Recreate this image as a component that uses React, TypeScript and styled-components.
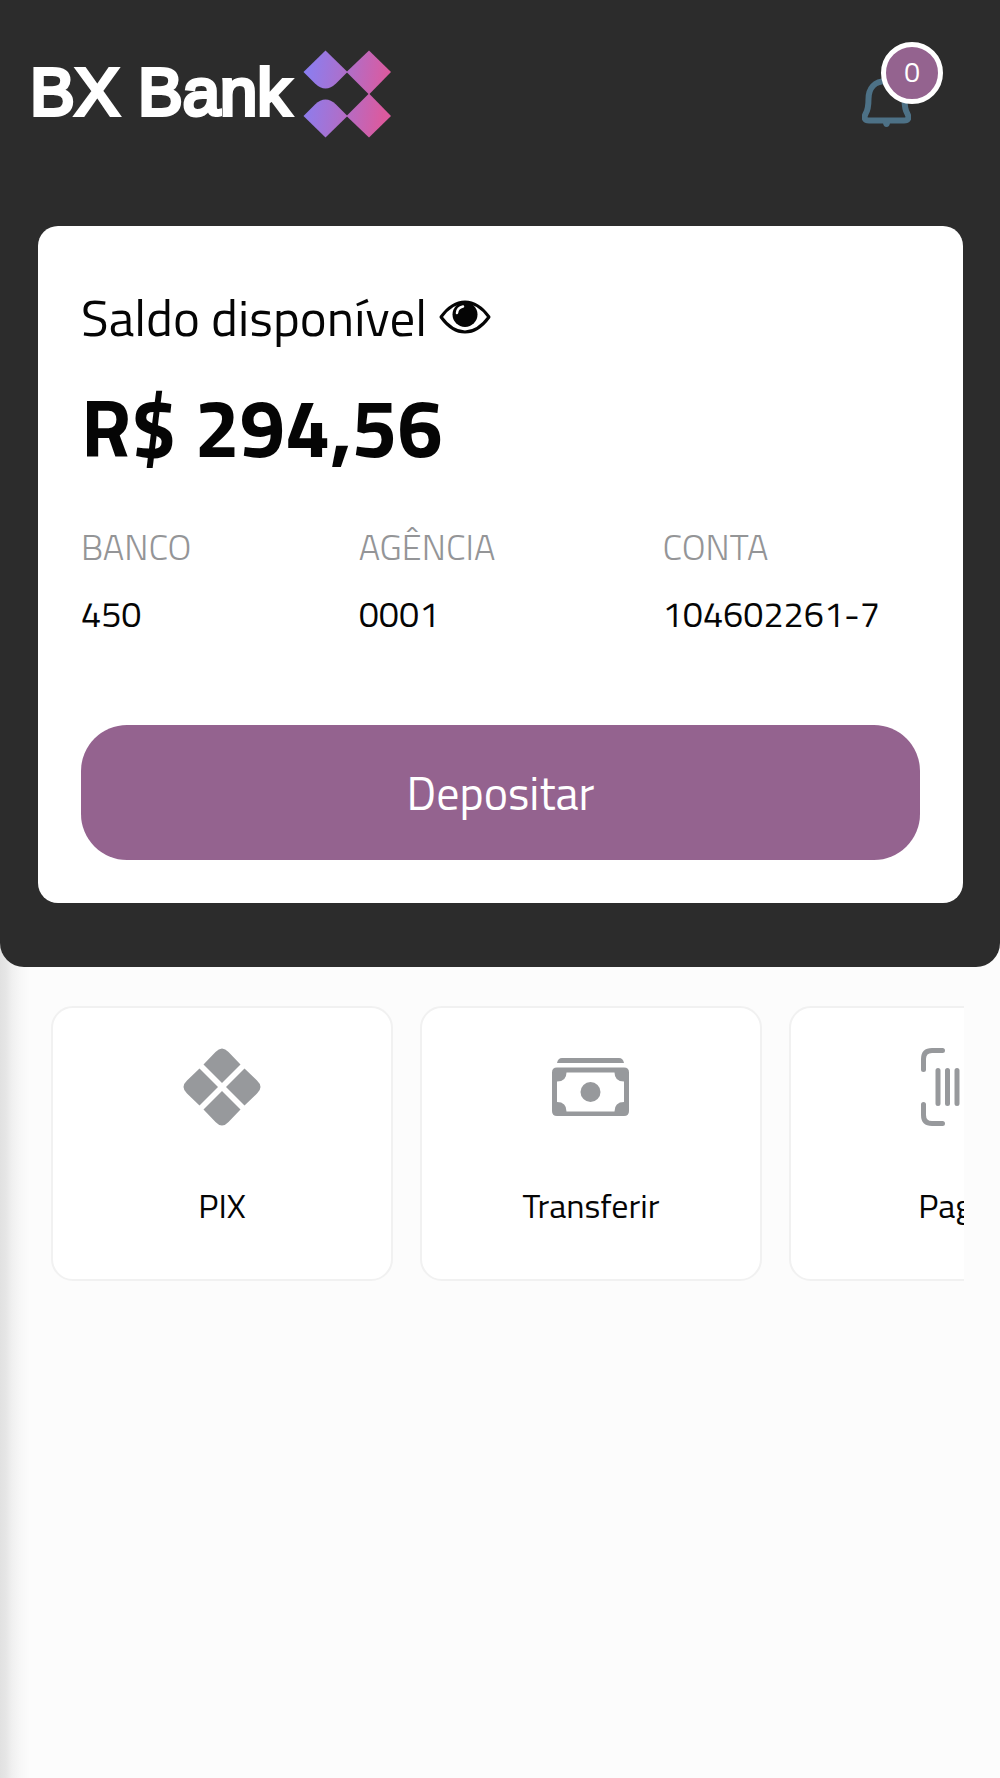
import React from "react";
import styled, { createGlobalStyle } from "styled-components";

const GlobalStyle = createGlobalStyle`
  *, *::before, *::after { box-sizing: border-box; }
  body {
    margin: 0;
    background: #fcfcfc;
    color: #050505;
    font-family: "Titillium Web", Roboto, "Open Sans", sans-serif;
  }
  h1, h2, p, dl, dt, dd, ul { margin: 0; padding: 0; font-weight: 400; }
  button { font: inherit; color: inherit; border: 0; padding: 0; cursor: pointer; }
  svg { display: block; flex: none; }
`;

const Page = styled.main`
  min-height: 100vh;
  background: linear-gradient(to right, #e1e1e1 0, #e6e6e6 6px, #f0f0f0 12px, #f7f7f7 20px, #fcfcfc 30px);
`;

const Hero = styled.header`
  padding: 42px 37px 64px 38px;
  background: #2c2c2c;
  border-radius: 0 0 24px 24px;
`;

const TopBar = styled.div`
  display: flex;
  justify-content: space-between;
  align-items: flex-start;
  margin: 0 20px 88px -8px;
`;

const Brand = styled.h1`
  display: flex;
  align-items: center;
  gap: 12px;
  padding-top: 8px;
  color: #fff;
`;

const BrandName = styled.span`
  padding-bottom: 4px;
  font-family: "Liberation Sans", Arial, sans-serif;
  font-size: 67px;
  line-height: 84px;
  white-space: nowrap;
  -webkit-text-stroke: 4px #fff;
`;

const BellButton = styled.button`
  position: relative;
  display: flex;
  align-items: flex-end;
  width: 81px;
  height: 86px;
  background: none;
`;

const Badge = styled.span`
  position: absolute;
  top: 0;
  right: 0;
  display: flex;
  align-items: center;
  justify-content: center;
  width: 62px;
  height: 62px;
  border: 5px solid #fff;
  border-radius: 50%;
  background: #94638f;
  color: #fff;
  font-size: 28px;
  line-height: 40px;
  padding-bottom: 2px;
`;

const BalanceCard = styled.section`
  padding: 61px 43px 43px;
  background: #fff;
  border-radius: 20px;
`;

const BalanceHeading = styled.div`
  display: flex;
  align-items: center;
  gap: 12px;
`;

const BalanceTitle = styled.h2`
  font-size: 51px;
  line-height: 60px;
`;

const EyeButton = styled.button`
  background: none;
`;

const Amount = styled.p`
  margin-top: 35px;
  font-size: 81px;
  line-height: 90px;
  font-weight: 700;
`;

const AccountList = styled.dl`
  display: flex;
  justify-content: space-between;
  margin: 55px 40px 91px 0;
  line-height: 40px;
`;

const AccountLabel = styled.dt`
  margin-bottom: 27px;
  color: #949597;
  font-size: 36px;
  font-weight: 300;
`;

const AccountValue = styled.dd`
  font-size: 36px;
`;

const DepositButton = styled.button`
  display: block;
  width: 100%;
  height: 135px;
  border-radius: 46px;
  background: #94638f;
  color: #fff;
  font-size: 46px;
`;

const Actions = styled.nav`
  display: flex;
  gap: 27px;
  margin: 39px 36px 0 38px;
  padding-left: 13px;
  overflow: hidden;
`;

const ActionCard = styled.button`
  flex: 0 0 342px;
  display: flex;
  flex-direction: column;
  align-items: center;
  gap: 59px;
  padding: 40px 0 54px;
  border: 2px solid #f1f1f1;
  border-radius: 22px;
  background: #fff;
  color: #050505;
  font-size: 34px;
  line-height: 40px;
`;

const LogoMark = () => (
  <svg width="88" height="88" viewBox="0 0 88 88" aria-hidden="true">
    <defs>
      <linearGradient id="mark" gradientUnits="userSpaceOnUse" x1="0" y1="0" x2="88" y2="12">
        <stop offset="0" stopColor="#8680f5" />
        <stop offset="0.5" stopColor="#ad6fcb" />
        <stop offset="1" stopColor="#dc5a9e" />
      </linearGradient>
    </defs>
    <g fill="url(#mark)">
      <path d="M22.500 0.500L44.500 22L33 33.500Q22.500 43.500 12 33.500L0.500 22Z" />
      <path d="M22.500 87.500L44.500 66L33 54.500Q22.500 44.500 12 54.500L0.500 66Z" />
      <path d="M66 0.500L88 22L66 44.500L43.500 22Z" />
      <path d="M66 43.500L88 66L66 87.500L43.500 66Z" />
    </g>
  </svg>
);

const BellIcon = () => (
  <svg width="49" height="52" viewBox="0 0 49 52" fill="none" aria-hidden="true">
    <path
      d="M24.500 5C12 5 6.500 13 6.500 23C6.500 31 6 34 3.500 38C1.500 42 3 44.500 7 44.500H42C46 44.500 47.500 42 45.500 38C43 34 42.500 31 42.500 23C42.500 13 37 5 24.500 5Z"
      stroke="#4d7186"
      strokeWidth="6"
      strokeLinejoin="round"
    />
    <path d="M21 47H28Q27.500 51 24.500 51T21 47Z" fill="#4d7186" />
  </svg>
);

const EyeIcon = () => (
  <svg width="52" height="34" viewBox="0 0 52 34" aria-hidden="true">
    <path
      d="M2 17Q13 2 26 2T50 17Q39 32 26 32T2 17Z"
      fill="#fff"
      stroke="#050505"
      strokeWidth="3"
      strokeLinejoin="round"
    />
    <circle cx="26" cy="14.500" r="12.500" fill="#050505" />
    <path d="M18 13Q18.500 7.500 24 6.500" stroke="#fff" strokeWidth="2.500" strokeLinecap="round" fill="none" />
  </svg>
);

const PixIcon = () => (
  <svg width="78" height="78" viewBox="0 0 78 78" fill="#97999c" aria-hidden="true">
    <path d="M20.500 16.500L32.500 4Q39 -3 45.500 4L57.500 16.500L39 35Z" />
    <path d="M20.500 61.500L32.500 74Q39 81 45.500 74L57.500 61.500L39 43Z" />
    <path d="M16.500 20.500L4 32.500Q-3 39 4 45.500L16.500 57.500L35 39Z" />
    <path d="M61.500 20.500L74 32.500Q81 39 74 45.500L61.500 57.500L43 39Z" />
  </svg>
);

const MoneyIcon = () => (
  <svg width="78" height="78" viewBox="0 0 78 78" fill="#97999c" aria-hidden="true">
    <path d="M5 15Q6 10 10 10H67Q71 10 72 15Z" />
    <path
      fillRule="evenodd"
      d="M5 19.500H72Q77 19.500 77 24.500V63Q77 68 72 68H5Q0 68 0 63V24.500Q0 19.500 5 19.500ZM14.500 24.500Q14.500 33.500 5 33.500V54Q14.500 54 14.500 63.500H62.500Q62.500 54 72 54V33.500Q62.500 33.500 62.500 24.500Z"
    />
    <circle cx="38.500" cy="44" r="10" />
  </svg>
);

const BarcodeIcon = () => (
  <svg width="78" height="78" viewBox="0 0 78 78" fill="none" stroke="#97999c" strokeWidth="5" strokeLinecap="round" aria-hidden="true">
    <path d="M2.500 21.500V11Q2.500 2.500 11 2.500H21.500M56.500 2.500H67Q75.500 2.500 75.500 11V21.500M2.500 56.500V67Q2.500 75.500 11 75.500H21.500M56.500 75.500H67Q75.500 75.500 75.500 67V56.500" />
    <path d="M17 22.500V55.500M26.500 22.500V55.500M36 22.500V55.500M45.500 22.500V55.500M55 22.500V55.500" />
  </svg>
);

const account = [
  { label: "BANCO", value: "450" },
  { label: "AGÊNCIA", value: "0001" },
  { label: "CONTA", value: "104602261-7" },
];

const actions = [
  { label: "PIX", Icon: PixIcon },
  { label: "Transferir", Icon: MoneyIcon },
  { label: "Pagar", Icon: BarcodeIcon },
];

export default function App() {
  return (
    <Page>
      <GlobalStyle />
      <Hero>
        <TopBar>
          <Brand>
            <BrandName>BX Bank</BrandName>
            <LogoMark />
          </Brand>
          <BellButton type="button">
            <BellIcon />
            <Badge>0</Badge>
          </BellButton>
        </TopBar>
        <BalanceCard>
          <BalanceHeading>
            <BalanceTitle id="balance">Saldo disponível</BalanceTitle>
            <EyeButton type="button" aria-labelledby="balance">
              <EyeIcon />
            </EyeButton>
          </BalanceHeading>
          <Amount>R$ 294,56</Amount>
          <AccountList>
            {account.map(({ label, value }) => (
              <div key={label}>
                <AccountLabel>{label}</AccountLabel>
                <AccountValue>{value}</AccountValue>
              </div>
            ))}
          </AccountList>
          <DepositButton type="button">Depositar</DepositButton>
        </BalanceCard>
      </Hero>
      <Actions>
        {actions.map(({ label, Icon }) => (
          <ActionCard type="button" key={label}>
            <Icon />
            {label}
          </ActionCard>
        ))}
      </Actions>
    </Page>
  );
}
